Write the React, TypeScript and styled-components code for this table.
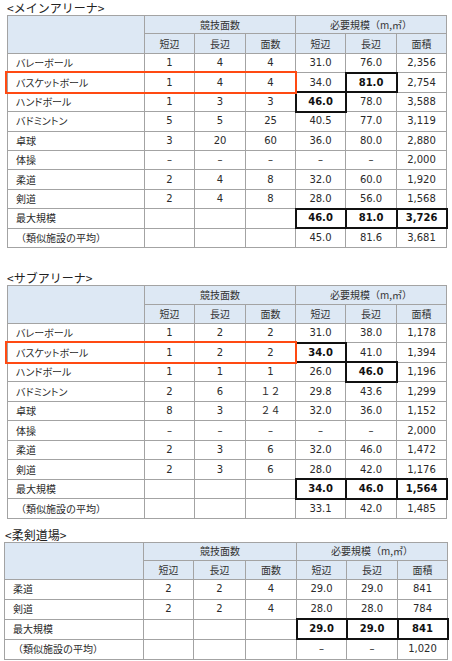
import React from "react";
import styled, { createGlobalStyle, css } from "styled-components";

const Global = createGlobalStyle`
  html, body { margin: 0; padding: 0; background: #fff; }
  body { font-family: "DejaVu Sans", "Noto Sans CJK JP", sans-serif; color: #222; }
`;

const Page = styled.div`
  width: 452px;
  height: 661px;
  overflow: hidden;
  display: flex;
  flex-direction: column;
`;

const Section = styled.section<{ $top: number; $left: number }>`
  margin-top: ${(p) => p.$top}px;
  padding-left: ${(p) => p.$left}px;
  display: flex;
  flex-direction: column;
`;

const Title = styled.h2<{ $pad: number }>`
  margin: 0;
  height: 15px;
  padding-left: ${(p) => p.$pad}px;
  font: 400 12px/15px "Noto Sans CJK JP", sans-serif;
  color: #222;
  white-space: nowrap;
`;

const Grid = styled.table<{ $w: number }>`
  border-collapse: collapse;
  table-layout: fixed;
  width: ${(p) => p.$w}px;
  border: 1px solid #8f8f8f;
  font-size: 10px;
`;

const Row = styled.tr<{ $h: number }>`
  height: ${(p) => p.$h}px;
`;

const Head = styled.th`
  background: #dde8f4;
  border: 1px solid #a3a3a3;
  padding: 0;
  font: 400 10px/12px "Noto Sans CJK JP", sans-serif;
  color: #333;
  text-align: center;
  vertical-align: middle;
`;

const Cell = styled.td<{ $strong?: boolean }>`
  border: 1px solid #a3a3a3;
  padding: 0;
  text-align: center;
  vertical-align: middle;
  line-height: 12px;
  color: #2a2a2a;
  white-space: nowrap;
  ${(p) =>
    p.$strong &&
    css`
      font-weight: 700;
      color: #111;
      outline: 2px solid #111;
      outline-offset: -1px;
    `}
`;

const NameCell = styled.td<{ $plain?: boolean }>`
  position: relative;
  border: 1px solid #a3a3a3;
  padding: 0 0 0 8px;
  text-align: left;
  vertical-align: middle;
  font: 400 10px/12px "Noto Sans CJK JP", sans-serif;
  font-feature-settings: ${(p) => (p.$plain ? "normal" : '"palt"')};
  color: #2a2a2a;
  white-space: nowrap;
`;

const Highlight = styled.span<{ $w: number }>`
  position: absolute;
  left: -3px;
  top: -2px;
  bottom: -2px;
  width: ${(p) => p.$w}px;
  box-sizing: border-box;
  border: 2px solid #ff4a12;
  pointer-events: none;
`;

type DataRow = { name: string; v: string[]; hl?: boolean; plain?: boolean };

type TableSpec = {
  title: string;
  top: number;
  left: number;
  titlePad: number;
  cols: number[];
  h1: number;
  h2: number;
  rowH: number;
  rows: DataRow[];
};

const DASH = "–";

const tables: TableSpec[] = [
  {
    title: "<メインアリーナ>",
    top: 0,
    left: 7,
    titlePad: 0,
    cols: [137, 50, 51, 50, 50, 51, 50],
    h1: 18,
    h2: 20,
    rowH: 19.4,
    rows: [
      { name: "バレーボール", v: ["1", "4", "4", "31.0", "76.0", "2,356"] },
      { name: "バスケットボール", v: ["1", "4", "4", "34.0", "81.0*", "2,754"], hl: true },
      { name: "ハンドボール", v: ["1", "3", "3", "46.0*", "78.0", "3,588"] },
      { name: "バドミントン", v: ["5", "5", "25", "40.5", "77.0", "3,119"] },
      { name: "卓球", v: ["3", "20", "60", "36.0", "80.0", "2,880"] },
      { name: "体操", v: [DASH, DASH, DASH, DASH, DASH, "2,000"] },
      { name: "柔道", v: ["2", "4", "8", "32.0", "60.0", "1,920"] },
      { name: "剣道", v: ["2", "4", "8", "28.0", "56.0", "1,568"] },
      { name: "最大規模", v: ["", "", "", "46.0*", "81.0*", "3,726*"] },
      { name: "（類似施設の平均）", v: ["", "", "", "45.0", "81.6", "3,681"], plain: true },
    ],
  },
  {
    title: "<サブアリーナ>",
    top: 22,
    left: 7,
    titlePad: 0,
    cols: [137, 50, 51, 50, 50, 51, 50],
    h1: 19,
    h2: 19,
    rowH: 19.5,
    rows: [
      { name: "バレーボール", v: ["1", "2", "2", "31.0", "38.0", "1,178"] },
      { name: "バスケットボール", v: ["1", "2", "2", "34.0*", "41.0", "1,394"], hl: true },
      { name: "ハンドボール", v: ["1", "1", "1", "26.0", "46.0*", "1,196"] },
      { name: "バドミントン", v: ["2", "6", "１２", "29.8", "43.6", "1,299"] },
      { name: "卓球", v: ["8", "3", "２４", "32.0", "36.0", "1,152"] },
      { name: "体操", v: [DASH, DASH, DASH, DASH, DASH, "2,000"] },
      { name: "柔道", v: ["2", "3", "6", "32.0", "46.0", "1,472"] },
      { name: "剣道", v: ["2", "3", "6", "28.0", "42.0", "1,176"] },
      { name: "最大規模", v: ["", "", "", "34.0*", "46.0*", "1,564*"] },
      { name: "（類似施設の平均）", v: ["", "", "", "33.1", "42.0", "1,485"], plain: true },
    ],
  },
  {
    title: "<柔剣道場>",
    top: 8,
    left: 4,
    titlePad: 1,
    cols: [139, 50, 52, 51, 50, 51, 50],
    h1: 18,
    h2: 19,
    rowH: 20,
    rows: [
      { name: "柔道", v: ["2", "2", "4", "29.0", "29.0", "841"] },
      { name: "剣道", v: ["2", "2", "4", "28.0", "28.0", "784"] },
      { name: "最大規模", v: ["", "", "", "29.0*", "29.0*", "841*"] },
      { name: "（類似施設の平均）", v: ["", "", "", DASH, DASH, "1,020"], plain: true },
    ],
  },
];

function SizeTable({ spec }: { spec: TableSpec }) {
  const total = spec.cols.reduce((a, b) => a + b, 0);
  const hlWidth = spec.cols.slice(0, 4).reduce((a, b) => a + b, 0) + 4;
  return (
    <Section $top={spec.top} $left={spec.left}>
      <Title $pad={spec.titlePad}>{spec.title}</Title>
      <Grid $w={total}>
        <colgroup>
          {spec.cols.map((w, i) => (
            <col key={i} style={{ width: w }} />
          ))}
        </colgroup>
        <thead>
          <Row $h={spec.h1}>
            <Head rowSpan={2} />
            <Head colSpan={3}>競技面数</Head>
            <Head colSpan={3}>必要規模（m,㎡）</Head>
          </Row>
          <Row $h={spec.h2}>
            <Head>短辺</Head>
            <Head>長辺</Head>
            <Head>面数</Head>
            <Head>短辺</Head>
            <Head>長辺</Head>
            <Head>面積</Head>
          </Row>
        </thead>
        <tbody>
          {spec.rows.map((r) => (
            <Row key={r.name} $h={spec.rowH}>
              <NameCell $plain={r.plain}>
                {r.name}
                {r.hl && <Highlight $w={hlWidth} />}
              </NameCell>
              {r.v.map((val, i) => {
                const strong = val.endsWith("*");
                return (
                  <Cell key={i} $strong={strong}>
                    {strong ? val.slice(0, -1) : val}
                  </Cell>
                );
              })}
            </Row>
          ))}
        </tbody>
      </Grid>
    </Section>
  );
}

export default function App() {
  return (
    <>
      <Global />
      <Page>
        {tables.map((t) => (
          <SizeTable key={t.title} spec={t} />
        ))}
      </Page>
    </>
  );
}
